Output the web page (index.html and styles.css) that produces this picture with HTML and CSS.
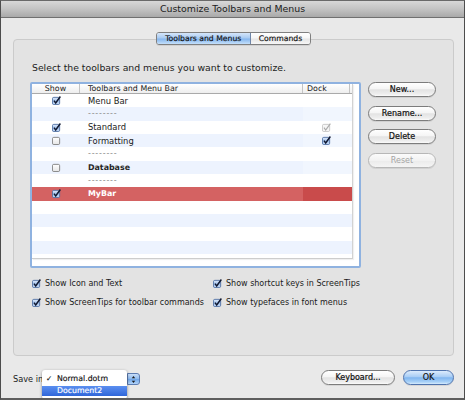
FILE: index.html
```html
<!DOCTYPE html>
<html>
<head>
<meta charset="utf-8">
<link rel="stylesheet" href="styles.css">
</head>
<body>
<svg class="defs" width="0" height="0" aria-hidden="true">
  <defs>
    <linearGradient id="gOn" x1="0" y1="0" x2="0" y2="1">
      <stop offset="0" stop-color="#e4eefc"/>
      <stop offset="0.5" stop-color="#9fc0ec"/>
      <stop offset="1" stop-color="#c9ddf7"/>
    </linearGradient>
    <linearGradient id="gOff" x1="0" y1="0" x2="0" y2="1">
      <stop offset="0" stop-color="#ffffff"/>
      <stop offset="1" stop-color="#e6e6e6"/>
    </linearGradient>
    <symbol id="cbOn" viewBox="0 0 10 10">
      <rect x="0.5" y="1.5" width="8" height="8" rx="1.5" fill="url(#gOn)" stroke="#4f6fa3"/>
      <path d="M2.2 5.2 L4.1 7.8 L9.3 0.6" fill="none" stroke="#101830" stroke-width="1.6"/>
    </symbol>
    <symbol id="cbOff" viewBox="0 0 10 10">
      <rect x="0.5" y="1.5" width="8" height="8" rx="1.5" fill="url(#gOff)" stroke="#7d7d7d"/>
    </symbol>
    <symbol id="cbDis" viewBox="0 0 10 10">
      <rect x="0.5" y="1.5" width="8" height="8" rx="1.5" fill="#f6f6f6" stroke="#c4c4c4"/>
      <path d="M2.2 5.2 L4.1 7.8 L9.3 0.6" fill="none" stroke="#a9a9a9" stroke-width="1.3"/>
    </symbol>
  </defs>
</svg>
<div class="window">
  <div class="titlebar">Customize Toolbars and Menus</div>
  <div class="content">
    <div class="tabs">
      <div class="seg sel">Toolbars and Menus</div>
      <div class="seg">Commands</div>
    </div>
    <div class="group">
      <p class="prompt">Select the toolbars and menus you want to customize.</p>
      <div class="main">
        <div class="list">
          <div class="table">
            <div class="hdr">
              <div class="hc show">Show</div>
              <div class="hc name">Toolbars and Menu Bar</div>
              <div class="hc dock">Dock</div>
              <div class="hc tail"></div>
            </div>
            <div class="row">
              <div class="c show"><svg class="cb"><use href="#cbOn"/></svg></div>
              <div class="c name">Menu Bar</div><div class="c dock"></div><div class="c tail"></div>
            </div>
            <div class="row alt">
              <div class="c show"></div>
              <div class="c name dash">--------</div><div class="c dock"></div><div class="c tail"></div>
            </div>
            <div class="row">
              <div class="c show"><svg class="cb"><use href="#cbOn"/></svg></div>
              <div class="c name">Standard</div>
              <div class="c dock"><svg class="cb"><use href="#cbDis"/></svg></div><div class="c tail"></div>
            </div>
            <div class="row alt">
              <div class="c show"><svg class="cb"><use href="#cbOff"/></svg></div>
              <div class="c name">Formatting</div>
              <div class="c dock"><svg class="cb"><use href="#cbOn"/></svg></div><div class="c tail"></div>
            </div>
            <div class="row">
              <div class="c show"></div>
              <div class="c name dash">--------</div><div class="c dock"></div><div class="c tail"></div>
            </div>
            <div class="row alt">
              <div class="c show"><svg class="cb"><use href="#cbOff"/></svg></div>
              <div class="c name bold">Database</div><div class="c dock"></div><div class="c tail"></div>
            </div>
            <div class="row">
              <div class="c show"></div>
              <div class="c name dash">--------</div><div class="c dock"></div><div class="c tail"></div>
            </div>
            <div class="row selrow">
              <div class="c show"><svg class="cb"><use href="#cbOn"/></svg></div>
              <div class="c name bold">MyBar</div><div class="c dock"></div><div class="c tail"></div>
            </div>
            <div class="row"></div>
            <div class="row alt"></div>
            <div class="row"></div>
            <div class="row alt"></div>
            <div class="row"></div>
          </div>
        </div>
        <div class="buttons">
          <div class="btn">New...</div>
          <div class="btn">Rename...</div>
          <div class="btn">Delete</div>
          <div class="btn disabled">Reset</div>
        </div>
      </div>
      <div class="options">
        <div class="opt"><svg class="cb2"><use href="#cbOn"/></svg><span>Show Icon and Text</span></div>
        <div class="opt"><svg class="cb2"><use href="#cbOn"/></svg><span>Show shortcut keys in ScreenTips</span></div>
        <div class="opt"><svg class="cb2"><use href="#cbOn"/></svg><span>Show ScreenTips for toolbar commands</span></div>
        <div class="opt"><svg class="cb2"><use href="#cbOn"/></svg><span>Show typefaces in font menus</span></div>
      </div>
    </div>
    <div class="footer">
      <div class="savein">
        <span class="lbl">Save in:</span>
        <div class="popup">
          <div class="popbody"></div>
          <div class="arrows">
            <svg width="13" height="11" viewBox="0 0 13 11"><path d="M6.5 1.5 L8.5 4 L4.5 4 Z M6.5 9.5 L8.5 7 L4.5 7 Z" fill="#1c1c1c"/></svg>
          </div>
          <div class="menu">
            <div class="mi"><span class="chk">✓</span>Normal.dotm</div>
            <div class="mi hl">Document2</div>
          </div>
        </div>
      </div>
      <div class="fbtns">
        <div class="btn kb">Keyboard...</div>
        <div class="btn ok">OK</div>
      </div>
    </div>
  </div>
</div>
</body>
</html>
```
FILE: styles.css
```css
html, body {
  margin: 0;
  padding: 0;
}
body {
  width: 465px;
  height: 400px;
  overflow: hidden;
  font-family: "DejaVu Sans", sans-serif;
  color: #1a1a1a;
  background: #ffffff;
}
.defs {
  position: absolute;
  width: 0;
  height: 0;
}
.window {
  width: 465px;
  height: 400px;
  box-sizing: border-box;
  border: 1px solid #4d4d4d;
  border-top-color: #6a6a6a;
  border-bottom: 2px solid #5e5e5e;
  background: #e9e9e9;
  overflow: hidden;
  display: flex;
  flex-direction: column;
}
.titlebar {
  height: 16px;
  line-height: 16px;
  text-align: center;
  font-size: 9.4px;
  color: #202020;
  background: linear-gradient(to bottom, #d8d8d8 0%, #c3c3c3 50%, #a9a9a9 100%);
  border-bottom: 1px solid #707070;
}
.content {
  flex: 1;
  padding: 14px 10px 0 12px;
  display: flex;
  flex-direction: column;
}
.tabs {
  align-self: center;
  display: flex;
  height: 13px;
  margin-bottom: -6px;
  position: relative;
  z-index: 1;
  border: 1px solid #7f7f7f;
  border-radius: 3px;
  box-sizing: border-box;
  overflow: hidden;
  box-shadow: 0 1px 0 rgba(0,0,0,0.08);
}
.seg {
  font-size: 7.7px;
  line-height: 11px;
  padding: 0 8px;
  color: #111;
  -webkit-text-stroke: 0.15px #111;
  background: linear-gradient(to bottom, #ffffff 0%, #f6f6f6 45%, #e6e6e6 55%, #f7f7f7 100%);
}
.seg.sel {
  width: 94px;
  box-sizing: border-box;
  text-align: center;
  padding: 0;
  border-right: 1px solid #6f86a8;
  background: linear-gradient(to bottom, #d5e6fa 0%, #a9cbf2 45%, #86b6ee 55%, #c4e0fb 100%);
}
.group {
  height: 317px;
  box-sizing: border-box;
  border: 1px solid #cbcbcb;
  border-radius: 4px;
  background: #e3e3e3;
  padding: 21px 0 0 16px;
}
.prompt {
  margin: 0 0 8px 2px;
  font-size: 9.3px;
  line-height: 13px;
  color: #1c1c1c;
}
.main {
  display: flex;
  gap: 7px;
}
.list {
  width: 331px;
  height: 186px;
  box-sizing: border-box;
  border: 2px solid #8fb2e0;
  border-radius: 2px;
  background: #ffffff;
}
.table {
  width: 321px;
  height: 175px;
  box-sizing: border-box;
  border-right: 1px solid #d2d2d2;
  border-bottom: 1px solid #cdcdcd;
  box-shadow: 1px 1px 1px rgba(0,0,0,0.06);
  overflow: hidden;
}
.hdr, .row {
  display: grid;
  grid-template-columns: 48px 223px 47px 2px;
}
.hdr {
  height: 9px;
  border-bottom: 1px solid #aaaaaa;
  background: linear-gradient(to bottom, #ffffff, #eeeeee);
}
.hc {
  font-size: 7.9px;
  line-height: 9px;
  color: #1c1c1c;
  border-right: 1px solid #c4c4c4;
  white-space: nowrap;
  overflow: hidden;
}
.hc.show {
  text-align: center;
}
.hc.name {
  padding-left: 8px;
}
.hc.dock {
  padding-left: 4px;
}
.hc.tail {
  border-right: none;
}
.row {
  height: 13.33px;
  align-items: center;
  background: #ffffff;
}
.row.alt {
  background: #edf3fe;
}
.row.alt .c.dock, .row.alt .c.tail {
  background: #f1f6fe;
}
.c {
  height: 100%;
  display: flex;
  align-items: center;
  font-size: 8.4px;
  color: #1a1a1a;
  white-space: nowrap;
}
.c.show, .c.dock {
  justify-content: center;
}
.c.name {
  padding-left: 8px;
}
.c.bold {
  font-weight: bold;
  font-size: 7.9px;
  color: #262626;
}
.c.dash {
  color: #8c8c8c;
  font-size: 8px;
  letter-spacing: 0.8px;
}
.row.selrow {
  background: #d46262;
}
.row.selrow .c {
  color: #ffffff;
}
.row.selrow .c.dock, .row.selrow .c.tail {
  background: #c94b4b;
}
.cb {
  width: 9px;
  height: 9px;
}
.buttons {
  display: flex;
  flex-direction: column;
  gap: 8.5px;
}
.btn {
  width: 68px;
  height: 15px;
  box-sizing: border-box;
  border: 1px solid #7c7c7c;
  border-radius: 8px;
  text-align: center;
  font-size: 8px;
  line-height: 13px;
  color: #111;
  -webkit-text-stroke: 0.2px #111;
  background: linear-gradient(to bottom, #ffffff 0%, #f5f5f5 45%, #e3e3e3 52%, #eeeeee 85%, #fbfbfb 100%);
  box-shadow: 0 1px 0 rgba(0,0,0,0.08);
}
.btn.disabled {
  border-color: #b7b7b7;
  color: #a5a5a5;
  -webkit-text-stroke: 0;
  background: linear-gradient(to bottom, #fbfbfb 0%, #f2f2f2 50%, #ebebeb 52%, #f4f4f4 100%);
}
.options {
  margin: 9px 0 0 2px;
  display: grid;
  grid-template-columns: 181px auto;
  row-gap: 7px;
}
.opt {
  display: flex;
  align-items: center;
  gap: 4px;
  height: 12px;
  font-size: 8px;
  color: #1a1a1a;
  white-space: nowrap;
}
.cb2 {
  width: 9px;
  height: 9px;
}
.footer {
  margin-top: 14px;
  display: flex;
  justify-content: space-between;
  align-items: center;
  height: 15px;
}
.savein {
  display: flex;
  align-items: center;
  padding-top: 3px;
}
.lbl {
  font-size: 8.2px;
  color: #1a1a1a;
  white-space: nowrap;
  margin-right: -4px;
}
.popup {
  position: relative;
  width: 98px;
  height: 12px;
  display: flex;
}
.popbody {
  flex: 1;
  border: 1px solid #8b8b8b;
  border-right: none;
  border-radius: 3px 0 0 3px;
  background: linear-gradient(#ffffff, #ececec);
}
.arrows {
  width: 13px;
  height: 12px;
  box-sizing: border-box;
  border: 1px solid #5d7db3;
  border-radius: 0 3px 3px 0;
  background: linear-gradient(to bottom, #c9def8 0%, #8cb9ee 50%, #6ea5e8 52%, #b3d5fa 100%);
  display: flex;
  align-items: center;
  justify-content: center;
}
.arrows svg {
  display: block;
}
.menu {
  position: absolute;
  left: 0;
  top: -3px;
  width: 85px;
  height: 29px;
  box-sizing: border-box;
  padding-top: 3px;
  background: #ffffff;
  border-radius: 3px;
  box-shadow: 0 1px 3px rgba(0,0,0,0.45);
}
.mi {
  height: 12px;
  line-height: 12px;
  font-size: 7.8px;
  color: #111;
  padding-left: 15px;
  position: relative;
  -webkit-text-stroke: 0.15px #111;
}
.mi .chk {
  position: absolute;
  left: 4px;
  top: 0;
  font-size: 7.5px;
}
.mi.hl {
  height: 10px;
  line-height: 10px;
  margin-top: 1px;
  color: #ffffff;
  -webkit-text-stroke: 0.15px #fff;
  background: linear-gradient(to bottom, #5b8ff0, #2f66d9);
}
.fbtns {
  display: flex;
  gap: 8px;
}
.btn.kb {
  width: 74px;
}
.btn.ok {
  width: 51px;
  border-color: #4f73ad;
  background: linear-gradient(to bottom, #dcebfc 0%, #a8cdf5 45%, #80b5ef 52%, #a9d2f8 85%, #d7ecfd 100%);
}
```
